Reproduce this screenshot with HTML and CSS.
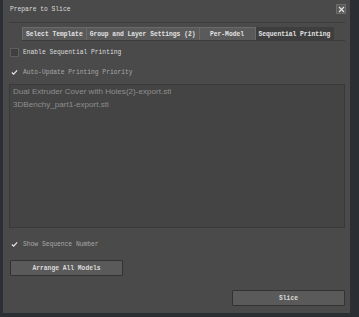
FILE: index.html
```html
<!DOCTYPE html>
<html lang="en">
<head>
  <meta charset="UTF-8" />
  <title>Prepare to Slice</title>
  <link rel="stylesheet" href="styles.css">
</head>
<body>
  <div class="dialog">
    <div class="title-bar">
      <span class="title">Prepare to Slice</span>
      <button class="close-btn">
        <svg width="7" height="7" viewBox="0 0 7 7"><path d="M1 1 L6 6 M6 1 L1 6" stroke="#e0e0e0" stroke-width="1.3"/></svg>
      </button>
    </div>

    <div class="tabs">
      <div class="tab">Select Template</div>
      <div class="tab">Group and Layer Settings (2)</div>
      <div class="tab">Per-Model</div>
      <div class="tab active">Sequential Printing</div>
    </div>

    <label class="check-row">
      <span class="box"></span>
      <span class="label bright">Enable Sequential Printing</span>
    </label>
    <label class="check-row">
      <span class="box checked">
        <svg width="8" height="7" viewBox="0 0 8 7"><path d="M1 3.5 L3 5.5 L7 1" stroke="#e8e8e8" stroke-width="1.3" fill="none"/></svg>
      </span>
      <span class="label">Auto-Update Printing Priority</span>
    </label>

    <div class="model-list">
      <div class="model">Dual Extruder Cover with Holes(2)-export.stl</div>
      <div class="model">3DBenchy_part1-export.stl</div>
    </div>

    <label class="check-row show-seq">
      <span class="box checked">
        <svg width="8" height="7" viewBox="0 0 8 7"><path d="M1 3.5 L3 5.5 L7 1" stroke="#e8e8e8" stroke-width="1.3" fill="none"/></svg>
      </span>
      <span class="label">Show Sequence Number</span>
    </label>

    <button class="btn arrange">Arrange All Models</button>

    <div class="footer">
      <button class="btn slice">Slice</button>
    </div>
  </div>
</body>
</html>
```

FILE: styles.css
```css
body {
  margin: 0;
  background: #2b2f33;
  font-family: 'Liberation Mono', monospace;
  font-size: 6.3px;
  color: #d6d6d6;
  height: 317px;
  overflow: hidden;
}
.dialog {
  margin-left: 3px;
  width: 347px;
  height: 313px;
  background: #4a4a4a;
  box-sizing: border-box;
  padding: 0 5px 0 6px;
  display: flex;
  flex-direction: column;
}
.title-bar {
  height: 23px;
  display: flex;
  justify-content: space-between;
  align-items: center;
  border-bottom: 1px solid #3c3c3c;
  box-sizing: border-box;
  padding: 0 0 4px 1px;
}
.title {
  color: #dcdcdc;
}
.close-btn {
  width: 10px;
  height: 10px;
  padding: 0;
  margin-right: -1px;
  border: 1px solid #6c6c6c;
  background: #5a5a5a;
  display: flex;
  align-items: center;
  justify-content: center;
}

.tabs {
  display: flex;
  margin: 4px 0 0 13px;
  border-bottom: 1px solid #3a3a3a;
  height: 14px;
  box-sizing: border-box;
}
.tab {
  height: 13px;
  line-height: 13px;
  padding: 0 3px;
  min-width: 56px;
  text-align: center;
  background: #5a5a5a;
  border: 1px solid #6a6a6a;
  border-bottom: none;
  border-left: none;
  box-sizing: border-box;
  color: #e2e2e2;
  font-weight: bold;
}
.tab:first-child {
  border-left: 1px solid #6a6a6a;
}
.tab.active {
  background: #3e3e3e;
  border-color: #3e3e3e;
}

.check-row {
  display: flex;
  align-items: center;
  gap: 4px;
  height: 14px;
  margin-top: 4px;
}
.check-row + .check-row {
  margin-top: 6px;
}
.box {
  width: 7px;
  height: 7px;
  margin-left: 1px;
  border: 1px solid #5e5e5e;
  background: #3f3f3f;
  display: flex;
  align-items: center;
  justify-content: center;
}
.box.checked {
  border-color: #4a4a4a;
  background: #4a4a4a;
}
.label {
  color: #a8a8a8;
}
.label.bright {
  color: #dcdcdc;
}

.model-list {
  margin-top: 5px;
  height: 144px;
  background: #444444;
  border: 1px solid #3a3a3a;
  border-right-color: #383838;
  box-sizing: border-box;
  padding: 0 3px;
  font-family: 'Liberation Sans', sans-serif;
  font-size: 8.1px;
  color: #8e8e8e;
}
.model {
  height: 13px;
  line-height: 13px;
}

.show-seq {
  margin-top: 9px;
}

.btn {
  width: 113px;
  height: 16px;
  padding: 0;
  background: #5a5a5a;
  border: 1px solid #333;
  border-radius: 1px;
  font-family: 'Liberation Mono', monospace;
  font-size: 6.3px;
  color: #dadada;
  font-weight: bold;
}
.arrange {
  margin: 9px 0 0 1px;
}
.footer {
  display: flex;
  justify-content: flex-end;
  margin-top: 14px;
}
```
